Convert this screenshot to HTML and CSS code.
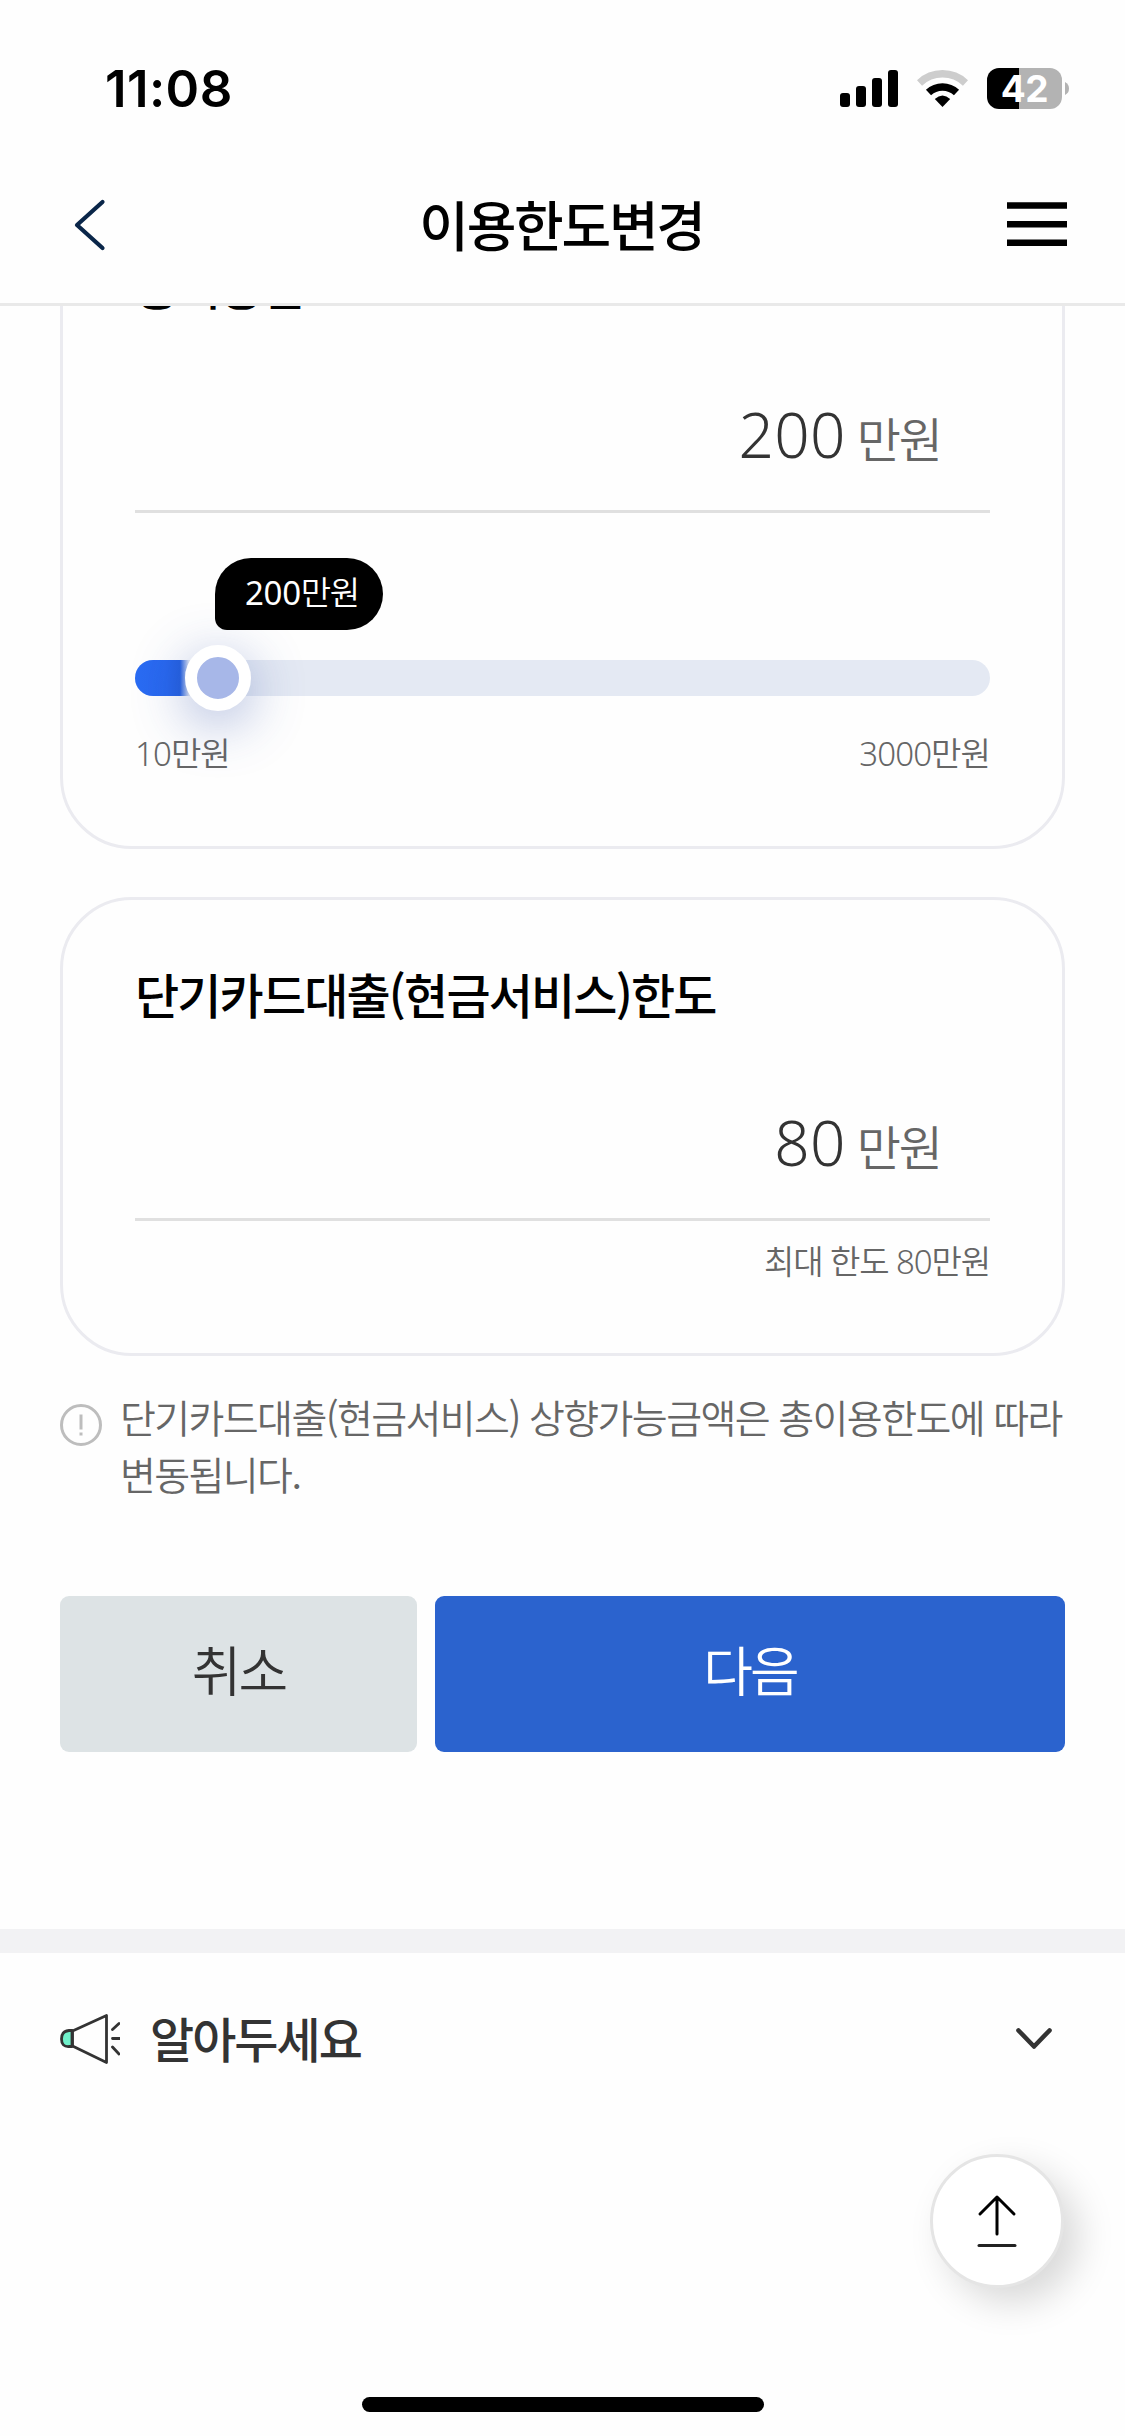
FILE: index.html
```html
<!DOCTYPE html>
<html lang="ko">
<head>
<meta charset="utf-8">
<title>이용한도변경</title>
<link rel="stylesheet" href="styles.css">
</head>
<body>
<div class="screen">
  <div class="status">
    <span class="clock">11:08</span>
    <div class="status-icons">
      <svg class="signal" width="58" height="37" viewBox="0 0 58 37"><rect x="0" y="23" width="10" height="14" rx="3"/><rect x="16" y="16" width="10" height="21" rx="3"/><rect x="32" y="8" width="10" height="29" rx="3"/><rect x="48" y="0" width="10" height="37" rx="3"/></svg>
      <svg class="wifi" width="51" height="37" viewBox="0 0 51 37" fill="none"><path d="M2.5 13A33.5 33.5 0 0 1 48.500 13" stroke="#cdcdcd" stroke-width="7.500"/><path d="M11.500 22.500A20.500 20.500 0 0 1 39.500 22.500" stroke="#000" stroke-width="7.500"/><path d="M25.500 37L17.800 29Q25.500 22 33.200 29Z" fill="#000"/></svg>
      <div class="battery"><span class="level">42</span></div>
      <svg class="nub" width="4" height="13" viewBox="0 0 4 13"><path d="M0 0Q4 2 4 6.500T0 13Z" fill="#b3b3b3"/></svg>
    </div>
  </div>
  <header class="header">
    <svg class="back" width="34" height="54" viewBox="0 0 34 54"><path d="M30.500 4L5 27L30.500 50" fill="none" stroke="#0a2649" stroke-width="4.200" stroke-linecap="round" stroke-linejoin="round"/></svg>
    <h1 class="page-title">이용한도변경</h1>
    <svg class="menu" width="60" height="45" viewBox="0 0 60 45"><path d="M0 3.500H60M0 22.200H60M0 40.800H60" stroke="#000" stroke-width="6.500"/></svg>
  </header>

  <main class="main">
    <section class="card card-total">
      <h2 class="card-title">총이용한도</h2>
      <div class="amount"><span class="num">200</span><span class="unit">만원</span></div>
      <div class="slider">
        <div class="track"><div class="fill"></div></div>
        <div class="thumb"></div>
        <div class="bubble"><b class="bubble-num">200</b>만원</div>
      </div>
      <div class="range"><span>10만원</span><span>3000만원</span></div>
    </section>

    <section class="card card-cash">
      <h2 class="card-title">단기카드대출(현금서비스)한도</h2>
      <div class="amount"><span class="num">80</span><span class="unit">만원</span></div>
      <p class="max">최대 한도 80만원</p>
    </section>

    <div class="notice">
      <svg class="info" width="42" height="42" viewBox="0 0 42 42" fill="none" stroke="#bdbdbd" stroke-width="3"><circle cx="21" cy="21" r="19.500"/><path d="M21 10.500V25.500M21 28.500V31.500"/></svg>
      <p class="notice-text">단기카드대출(현금서비스) 상향가능금액은 총이용한도에 따라<br>변동됩니다.</p>
    </div>

    <div class="actions">
      <button class="btn btn-cancel">취소</button>
      <button class="btn btn-next">다음</button>
    </div>
  </main>

  <section class="guide">
    <svg class="horn" width="60" height="50" viewBox="0 0 60 50" fill="none" stroke="#333" stroke-width="2.800" stroke-linecap="round" stroke-linejoin="round"><path d="M12 16.500H9Q1.500 17 1.500 25T9 32.500H12Z" fill="#70f1ca"/><path d="M12.500 17L46.500 1.500V48.500L12.500 32Z"/><path d="M52.500 15.500L59 9.500M52.500 24.500H60M52.500 33L59 40"/></svg>
    <h2 class="guide-title">알아두세요</h2>
    <svg class="down" width="36" height="22" viewBox="0 0 36 22"><path d="M2.500 2.500L18 18.500L33.500 2.500" fill="none" stroke="#333" stroke-width="4.600" stroke-linecap="round" stroke-linejoin="round"/></svg>
  </section>

  <button class="to-top">
    <svg width="40" height="54" viewBox="0 0 40 54" fill="none" stroke="#000" stroke-width="3" stroke-linecap="round" stroke-linejoin="round"><path d="M3 20L20 3L37 20M20 3V40"/><path d="M2 51.500H38" stroke="#222"/></svg>
  </button>
  <div class="home"></div>
</div>
</body>
</html>
```
FILE: styles.css
```css
* { box-sizing: border-box; margin: 0; padding: 0; }
body {
  background: #fff;
  color: #000;
  font-family: "Noto Sans CJK KR", sans-serif;
}
.screen {
  position: relative;
  width: 1125px;
  height: 2436px;
  overflow: hidden;
  background: #fefefe;
}
svg { display: block; flex: none; }

.status {
  display: flex;
  justify-content: space-between;
  height: 141px;
  padding: 68px 56px 0 105px;
}
.clock {
  font: 600 51px/42px Inter, sans-serif;
  letter-spacing: 0.4px;
}
.status-icons { display: flex; align-items: flex-start; }
.signal { margin: 2px 19px 0 0; }
.wifi { margin: 2px 19px 0 0; }
.nub { margin: 14px 0 0 3px; }
.battery {
  width: 75px;
  height: 41px;
  border-radius: 12px;
  background: linear-gradient(90deg, #000 32px, #b3b3b3 32px);
  text-align: center;
}
.level {
  color: #fff;
  font: 700 37px/41px Inter, sans-serif;
  letter-spacing: -0.500px;
}

.header {
  display: grid;
  grid-template-columns: 60px 1fr 60px;
  align-items: center;
  height: 165px;
  padding: 5px 58px 0 72px;
  border-bottom: 3px solid #e9e9e9;
}
.page-title {
  margin: -2px 0 0 -16px;
  font-size: 54px;
  line-height: 78px;
  font-weight: 500;
  letter-spacing: -2.3px;
  text-align: center;
}

.main {
  height: 1623px;
  padding: 0 60px;
  overflow: hidden;
}
.card {
  border: 3px solid #ebebf0;
  border-radius: 72px;
  padding: 64px 72px 0;
}
.card-total { height: 660px; margin-top: -117px; }
.card-cash { height: 459px; margin-top: 48px; }
.card-title {
  height: 62px;
  font-size: 48px;
  line-height: 58px;
  font-weight: 500;
  letter-spacing: -1.85px;
  white-space: nowrap;
}
.card-total .card-title {
  line-height: 56px;
}
.amount {
  display: flex;
  justify-content: flex-end;
  align-items: baseline;
  height: 195px;
  padding: 71px 49px 0 0;
  border-bottom: 3px solid #e0e0e0;
}
.num {
  color: #333;
  font-family: "Noto Sans", sans-serif;
  font-size: 62px;
  line-height: 90px;
  font-weight: 300;
  letter-spacing: 0.300px;
}
.unit {
  margin-left: 11px;
  color: #666;
  font-size: 48px;
  line-height: 90px;
  font-weight: 350;
  letter-spacing: -2px;
}

.slider { position: relative; padding-top: 147px; }
.track {
  height: 36px;
  border-radius: 18px;
  background: #e4e9f3;
  overflow: hidden;
}
.fill {
  width: 66px;
  height: 36px;
  background: linear-gradient(90deg, #2a6cf3 0, #2867ee 30px, #2460e0 45px, #e4e9f3 54px);
}
.thumb {
  position: absolute;
  left: 50px;
  top: 132px;
  width: 66px;
  height: 66px;
  border: 12px solid #fff;
  border-radius: 50%;
  background: #a7b7e8;
  box-shadow: 0 12px 54px rgba(50, 80, 170, 0.42);
}
.bubble {
  position: absolute;
  left: 80px;
  top: 45px;
  width: 168px;
  height: 72px;
  padding-left: 30px;
  border-radius: 36px 36px 36px 12px;
  background: #000;
  color: #fff;
  font-family: "Noto Sans", "Noto Sans CJK KR", sans-serif;
  font-size: 33px;
  line-height: 69px;
  font-weight: 350;
  letter-spacing: -1.300px;
}
.bubble-num { font-weight: 400; letter-spacing: -0.300px; }
.range,
.max {
  color: #666;
  font-family: "Noto Sans", "Noto Sans CJK KR", sans-serif;
  font-size: 33px;
  line-height: 48px;
  font-weight: 350;
  letter-spacing: -0.900px;
}
.range {
  display: flex;
  justify-content: space-between;
  margin-top: 34px;
}
.max {
  margin-top: 17px;
  letter-spacing: -1.1px;
  text-align: right;
}

.notice { display: flex; gap: 18px; padding-top: 32px; }
.info { margin-top: 16px; }
.notice-text {
  color: #666;
  font-size: 39px;
  line-height: 57px;
  font-weight: 350;
  letter-spacing: -1.600px;
  white-space: nowrap;
}

.actions {
  display: grid;
  grid-template-columns: 357px 630px;
  gap: 18px;
  margin-top: 94px;
}
.btn {
  height: 156px;
  padding-bottom: 11px;
  border: 0;
  border-radius: 9px;
  font-family: inherit;
  font-size: 54px;
  font-weight: 350;
  letter-spacing: -3px;
}
.btn-cancel { background: #dde3e5; color: #333; }
.btn-next { background: #2b63ce; color: #fff; }

.guide {
  display: flex;
  align-items: center;
  height: 196px;
  padding: 0 73px 0 60px;
  border-top: 24px solid #f2f2f4;
}
.guide-title {
  flex: 1;
  margin: -5px 0 0 30px;
  color: #333;
  font-size: 48px;
  line-height: 72px;
  font-weight: 500;
  letter-spacing: -2px;
}

.to-top {
  position: absolute;
  left: 930px;
  top: 2154px;
  display: flex;
  align-items: center;
  justify-content: center;
  width: 134px;
  height: 134px;
  border: 3px solid #e5e5e5;
  border-radius: 50%;
  background: #fff;
  box-shadow: 15px 15px 36px rgba(0, 0, 0, 0.15);
}
.home {
  position: absolute;
  left: 362px;
  top: 2397px;
  width: 402px;
  height: 15px;
  border-radius: 8px;
  background: #000;
}
```
